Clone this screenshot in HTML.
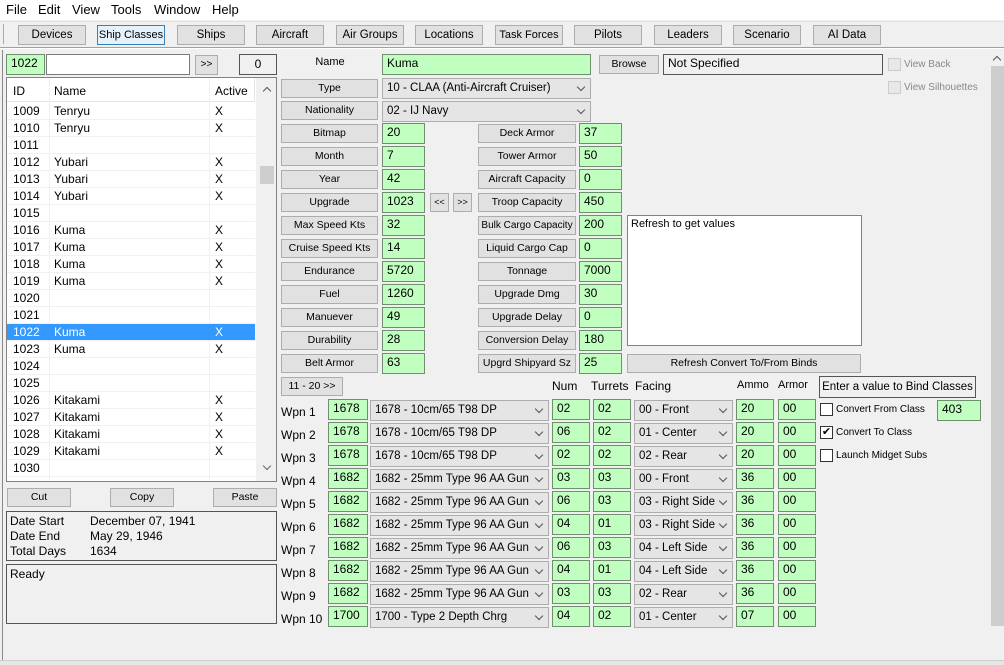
<!DOCTYPE html>
<html><head><meta charset="utf-8"><style>
*{box-sizing:border-box}
body{margin:0;width:1004px;height:665px;background:#f0f0f0;font-family:"Liberation Sans",sans-serif;font-size:12px;color:#000;position:relative;overflow:hidden}
.a{position:absolute;white-space:nowrap}
.b{position:absolute;background:#e1e1e1;border:1px solid #adadad;text-align:center;font-size:10.5px;line-height:17px;height:19px;white-space:nowrap;overflow:hidden}
.tb{position:absolute;top:25px;height:20px;width:68px;background:#e1e1e1;border:1px solid #adadad;text-align:center;font-size:11.5px;line-height:18px;white-space:nowrap;overflow:hidden}
.g{position:absolute;background:#c0ffc0;border:1px solid #6f8f6f;height:21px;padding:1px 0 0 4px;font-size:12px;line-height:15px}
.s{position:absolute;background:#e5e5e5;border:1px solid #adadad;height:21px;padding:0 0 0 4px;font-size:11.5px;line-height:19px;white-space:nowrap;overflow:hidden}
.s i{position:absolute;right:6px;top:5px;width:6px;height:6px;border-right:1.5px solid #555;border-bottom:1.5px solid #555;transform:rotate(45deg)}
.row{position:absolute;left:7px;width:248px;height:17px;line-height:17px;border-bottom:1px solid #f0f0f0}
.row span{position:absolute}
.cb{position:absolute;width:13px;height:13px;border:1px solid #333;background:#fff}
</style></head><body>
<div class="a" style="left:0;top:0;width:1004px;height:20px;background:#fff"></div>
<div class="a" style="left:6px;top:2px;font-size:13px">File</div>
<div class="a" style="left:38px;top:2px;font-size:13px">Edit</div>
<div class="a" style="left:72px;top:2px;font-size:13px">View</div>
<div class="a" style="left:111px;top:2px;font-size:13px">Tools</div>
<div class="a" style="left:154px;top:2px;font-size:13px">Window</div>
<div class="a" style="left:212px;top:2px;font-size:13px">Help</div>
<div class="a" style="left:0;top:21px;width:1004px;height:1px;background:#e3e3e3"></div>
<div class="a" style="left:3px;top:24px;width:1px;height:20px;background:#aaa"></div>
<div class="tb" style="left:18px">Devices</div>
<div class="tb" style="left:97px;border-color:#3c7fb1;background:#e5f1fb;font-size:11px">Ship Classes</div>
<div class="tb" style="left:177px">Ships</div>
<div class="tb" style="left:256px">Aircraft</div>
<div class="tb" style="left:336px">Air Groups</div>
<div class="tb" style="left:415px">Locations</div>
<div class="tb" style="left:495px;font-size:11px">Task Forces</div>
<div class="tb" style="left:574px">Pilots</div>
<div class="tb" style="left:654px">Leaders</div>
<div class="tb" style="left:733px">Scenario</div>
<div class="tb" style="left:813px">AI Data</div>
<div class="a" style="left:0;top:47px;width:1004px;height:2px;border-top:1px solid #a0a0a0;border-bottom:1px solid #fff"></div>
<div class="a" style="left:2px;top:50px;width:1px;height:612px;background:#888"></div>
<div class="a" style="left:991px;top:66px;width:13px;height:560px;background:#cdcdcd"></div>
<div class="a" style="left:994px;top:57px;width:6px;height:6px;border-left:1.5px solid #555;border-top:1.5px solid #555;transform:rotate(45deg)"></div>
<div class="a" style="left:0;top:660px;width:1004px;height:5px;background:#e6e6e6;border-top:1px solid #ccc"></div>

<div class="g" style="left:6px;top:54px;width:39px;height:21px">1022</div>
<div class="a" style="left:46px;top:54px;width:144px;height:21px;background:#fff;border:1px solid #7a7a7a"></div>
<div class="b" style="left:195px;top:55px;width:23px;height:20px;font-size:10px">&gt;&gt;</div>
<div class="a" style="left:239px;top:54px;width:38px;height:21px;border:1px solid #555;text-align:center;line-height:19px">0</div>
<div class="a" style="left:6px;top:77px;width:271px;height:405px;background:#fff;border:1px solid #828282"></div>
<div class="a" style="left:7px;top:78px;width:248px;height:24px;border-bottom:1px solid #e5e5e5"></div>
<div class="a" style="left:49px;top:78px;width:1px;height:402px;background:#f0f0f0"></div>
<div class="a" style="left:209px;top:78px;width:1px;height:402px;background:#f0f0f0"></div>
<div class="a" style="left:254px;top:78px;width:1px;height:24px;background:#e5e5e5"></div>
<div class="a" style="left:13px;top:84px">ID</div>
<div class="a" style="left:54px;top:84px">Name</div>
<div class="a" style="left:215px;top:84px">Active</div>
<div class="a" style="left:256px;top:78px;width:20px;height:403px;background:#f0f0f0"></div>
<div class="a" style="left:260px;top:166px;width:14px;height:18px;background:#cdcdcd"></div>
<div class="a" style="left:264px;top:88px;width:6px;height:6px;border-left:1.5px solid #555;border-top:1.5px solid #555;transform:rotate(45deg)"></div>
<div class="a" style="left:264px;top:463px;width:6px;height:6px;border-right:1.5px solid #666;border-bottom:1.5px solid #666;transform:rotate(45deg)"></div>
<div class="row" style="top:103px"><span style="left:6px">1009</span><span style="left:47px">Tenryu</span><span style="left:208px">X</span></div>
<div class="row" style="top:120px"><span style="left:6px">1010</span><span style="left:47px">Tenryu</span><span style="left:208px">X</span></div>
<div class="row" style="top:137px"><span style="left:6px">1011</span></div>
<div class="row" style="top:154px"><span style="left:6px">1012</span><span style="left:47px">Yubari</span><span style="left:208px">X</span></div>
<div class="row" style="top:171px"><span style="left:6px">1013</span><span style="left:47px">Yubari</span><span style="left:208px">X</span></div>
<div class="row" style="top:188px"><span style="left:6px">1014</span><span style="left:47px">Yubari</span><span style="left:208px">X</span></div>
<div class="row" style="top:205px"><span style="left:6px">1015</span></div>
<div class="row" style="top:222px"><span style="left:6px">1016</span><span style="left:47px">Kuma</span><span style="left:208px">X</span></div>
<div class="row" style="top:239px"><span style="left:6px">1017</span><span style="left:47px">Kuma</span><span style="left:208px">X</span></div>
<div class="row" style="top:256px"><span style="left:6px">1018</span><span style="left:47px">Kuma</span><span style="left:208px">X</span></div>
<div class="row" style="top:273px"><span style="left:6px">1019</span><span style="left:47px">Kuma</span><span style="left:208px">X</span></div>
<div class="row" style="top:290px"><span style="left:6px">1020</span></div>
<div class="row" style="top:307px"><span style="left:6px">1021</span></div>
<div class="row" style="top:324px;background:#3399ff;color:#fff"><span style="left:6px">1022</span><span style="left:47px">Kuma</span><span style="left:208px">X</span></div>
<div class="row" style="top:341px"><span style="left:6px">1023</span><span style="left:47px">Kuma</span><span style="left:208px">X</span></div>
<div class="row" style="top:358px"><span style="left:6px">1024</span></div>
<div class="row" style="top:375px"><span style="left:6px">1025</span></div>
<div class="row" style="top:392px"><span style="left:6px">1026</span><span style="left:47px">Kitakami</span><span style="left:208px">X</span></div>
<div class="row" style="top:409px"><span style="left:6px">1027</span><span style="left:47px">Kitakami</span><span style="left:208px">X</span></div>
<div class="row" style="top:426px"><span style="left:6px">1028</span><span style="left:47px">Kitakami</span><span style="left:208px">X</span></div>
<div class="row" style="top:443px"><span style="left:6px">1029</span><span style="left:47px">Kitakami</span><span style="left:208px">X</span></div>
<div class="row" style="top:460px"><span style="left:6px">1030</span></div>
<div class="b" style="left:7px;top:488px;width:64px">Cut</div>
<div class="b" style="left:110px;top:488px;width:64px">Copy</div>
<div class="b" style="left:213px;top:488px;width:64px">Paste</div>
<div class="a" style="left:6px;top:511px;width:271px;height:50px;border:1px solid #555"></div>
<div class="a" style="left:10px;top:514px;line-height:15px">Date Start<br>Date End<br>Total Days</div>
<div class="a" style="left:90px;top:514px;line-height:15px">December 07, 1941<br>May 29, 1946<br>1634</div>
<div class="a" style="left:6px;top:564px;width:271px;height:60px;border:1px solid #555"></div>
<div class="a" style="left:10px;top:567px">Ready</div>

<div class="a" style="left:315px;top:56px;width:30px;text-align:center;font-size:11px">Name</div>
<div class="g" style="left:382px;top:54px;width:209px">Kuma</div>
<div class="b" style="left:599px;top:55px;width:60px">Browse</div>
<div class="a" style="left:663px;top:54px;width:220px;height:21px;border:1px solid #555;padding:1px 4px">Not Specified</div>
<div class="cb" style="left:888px;top:58px;border-color:#ccc;background:#e8e8e8"></div>
<div class="a" style="left:904px;top:59px;font-size:10px;color:#888">View Back</div>
<div class="cb" style="left:888px;top:81px;border-color:#ccc;background:#e8e8e8"></div>
<div class="a" style="left:904px;top:82px;font-size:10px;color:#888">View Silhouettes</div>
<div class="b" style="left:281px;top:79px;width:97px">Type</div>
<div class="s" style="left:382px;top:78px;width:209px">10 - CLAA (Anti-Aircraft Cruiser)<i></i></div>
<div class="b" style="left:281px;top:101px;width:97px">Nationality</div>
<div class="s" style="left:382px;top:101px;width:209px">02 - IJ Navy<i></i></div>

<div class="b" style="left:281px;top:124px;width:97px">Bitmap</div><div class="g" style="left:382px;top:123px;width:43px">20</div>
<div class="b" style="left:281px;top:147px;width:97px">Month</div><div class="g" style="left:382px;top:146px;width:43px">7</div>
<div class="b" style="left:281px;top:170px;width:97px">Year</div><div class="g" style="left:382px;top:169px;width:43px">42</div>
<div class="b" style="left:281px;top:193px;width:97px">Upgrade</div><div class="g" style="left:382px;top:192px;width:43px">1023</div>
<div class="b" style="left:430px;top:193px;width:19px;font-size:9px">&lt;&lt;</div>
<div class="b" style="left:453px;top:193px;width:19px;font-size:9px">&gt;&gt;</div>
<div class="b" style="left:281px;top:216px;width:97px">Max Speed Kts</div><div class="g" style="left:382px;top:215px;width:43px">32</div>
<div class="b" style="left:281px;top:239px;width:97px">Cruise Speed Kts</div><div class="g" style="left:382px;top:238px;width:43px">14</div>
<div class="b" style="left:281px;top:262px;width:97px">Endurance</div><div class="g" style="left:382px;top:261px;width:43px">5720</div>
<div class="b" style="left:281px;top:285px;width:97px">Fuel</div><div class="g" style="left:382px;top:284px;width:43px">1260</div>
<div class="b" style="left:281px;top:308px;width:97px">Manuever</div><div class="g" style="left:382px;top:307px;width:43px">49</div>
<div class="b" style="left:281px;top:331px;width:97px">Durability</div><div class="g" style="left:382px;top:330px;width:43px">28</div>
<div class="b" style="left:281px;top:354px;width:97px">Belt Armor</div><div class="g" style="left:382px;top:353px;width:43px">63</div>

<div class="b" style="left:478px;top:124px;width:98px">Deck Armor</div><div class="g" style="left:579px;top:123px;width:43px">37</div>
<div class="b" style="left:478px;top:147px;width:98px">Tower Armor</div><div class="g" style="left:579px;top:146px;width:43px">50</div>
<div class="b" style="left:478px;top:170px;width:98px">Aircraft Capacity</div><div class="g" style="left:579px;top:169px;width:43px">0</div>
<div class="b" style="left:478px;top:193px;width:98px">Troop Capacity</div><div class="g" style="left:579px;top:192px;width:43px">450</div>
<div class="b" style="left:478px;top:216px;width:98px;font-size:10px">Bulk Cargo Capacity</div><div class="g" style="left:579px;top:215px;width:43px">200</div>
<div class="b" style="left:478px;top:239px;width:98px">Liquid Cargo Cap</div><div class="g" style="left:579px;top:238px;width:43px">0</div>
<div class="b" style="left:478px;top:262px;width:98px">Tonnage</div><div class="g" style="left:579px;top:261px;width:43px">7000</div>
<div class="b" style="left:478px;top:285px;width:98px">Upgrade Dmg</div><div class="g" style="left:579px;top:284px;width:43px">30</div>
<div class="b" style="left:478px;top:308px;width:98px">Upgrade Delay</div><div class="g" style="left:579px;top:307px;width:43px">0</div>
<div class="b" style="left:478px;top:331px;width:98px">Conversion Delay</div><div class="g" style="left:579px;top:330px;width:43px">180</div>
<div class="b" style="left:478px;top:354px;width:98px">Upgrd Shipyard Sz</div><div class="g" style="left:579px;top:353px;width:43px">25</div>

<div class="a" style="left:627px;top:215px;width:235px;height:131px;background:#fff;border:1px solid #828282;padding:2px 3px;font-size:11px">Refresh to get values</div>
<div class="b" style="left:627px;top:354px;width:234px">Refresh Convert To/From Binds</div>

<div class="b" style="left:281px;top:377px;width:62px">11 - 20 &gt;&gt;</div>
<div class="a" style="left:552px;top:379px">Num</div>
<div class="a" style="left:591px;top:379px">Turrets</div>
<div class="a" style="left:635px;top:379px">Facing</div>
<div class="a" style="left:737px;top:379px;font-size:11px">Ammo</div>
<div class="a" style="left:778px;top:379px;font-size:11px">Armor</div>
<div class="a" style="left:819px;top:376px;width:157px;height:22px;border:1px solid #555;text-align:center;line-height:20px;font-size:11.5px">Enter a value to Bind Classes</div>
<div class="cb" style="left:820px;top:403px"></div><div class="a" style="left:836px;top:404px;font-size:10px">Convert From Class</div>
<div class="g" style="left:937px;top:400px;width:44px">403</div>
<div class="cb" style="left:820px;top:426px;font-size:11px;line-height:11px;text-align:center">&#10004;</div><div class="a" style="left:836px;top:427px;font-size:10px">Convert To Class</div>
<div class="cb" style="left:820px;top:449px"></div><div class="a" style="left:836px;top:450px;font-size:10px">Launch Midget Subs</div>

<div class="a" style="left:281px;top:405px">Wpn 1</div><div class="g" style="left:328px;top:399px;width:40px">1678</div><div class="s" style="left:370px;top:400px;width:179px">1678 - 10cm/65 T98 DP<i></i></div><div class="g" style="left:552px;top:399px;width:38px">02</div><div class="g" style="left:593px;top:399px;width:38px">02</div><div class="s" style="left:634px;top:400px;width:99px">00 - Front<i></i></div><div class="g" style="left:736px;top:399px;width:38px">20</div><div class="g" style="left:778px;top:399px;width:38px">00</div>
<div class="a" style="left:281px;top:428px">Wpn 2</div><div class="g" style="left:328px;top:422px;width:40px">1678</div><div class="s" style="left:370px;top:423px;width:179px">1678 - 10cm/65 T98 DP<i></i></div><div class="g" style="left:552px;top:422px;width:38px">06</div><div class="g" style="left:593px;top:422px;width:38px">02</div><div class="s" style="left:634px;top:423px;width:99px">01 - Center<i></i></div><div class="g" style="left:736px;top:422px;width:38px">20</div><div class="g" style="left:778px;top:422px;width:38px">00</div>
<div class="a" style="left:281px;top:451px">Wpn 3</div><div class="g" style="left:328px;top:445px;width:40px">1678</div><div class="s" style="left:370px;top:446px;width:179px">1678 - 10cm/65 T98 DP<i></i></div><div class="g" style="left:552px;top:445px;width:38px">02</div><div class="g" style="left:593px;top:445px;width:38px">02</div><div class="s" style="left:634px;top:446px;width:99px">02 - Rear<i></i></div><div class="g" style="left:736px;top:445px;width:38px">20</div><div class="g" style="left:778px;top:445px;width:38px">00</div>
<div class="a" style="left:281px;top:474px">Wpn 4</div><div class="g" style="left:328px;top:468px;width:40px">1682</div><div class="s" style="left:370px;top:469px;width:179px">1682 - 25mm Type 96 AA Gun<i></i></div><div class="g" style="left:552px;top:468px;width:38px">03</div><div class="g" style="left:593px;top:468px;width:38px">03</div><div class="s" style="left:634px;top:469px;width:99px">00 - Front<i></i></div><div class="g" style="left:736px;top:468px;width:38px">36</div><div class="g" style="left:778px;top:468px;width:38px">00</div>
<div class="a" style="left:281px;top:497px">Wpn 5</div><div class="g" style="left:328px;top:491px;width:40px">1682</div><div class="s" style="left:370px;top:492px;width:179px">1682 - 25mm Type 96 AA Gun<i></i></div><div class="g" style="left:552px;top:491px;width:38px">06</div><div class="g" style="left:593px;top:491px;width:38px">03</div><div class="s" style="left:634px;top:492px;width:99px">03 - Right Side<i></i></div><div class="g" style="left:736px;top:491px;width:38px">36</div><div class="g" style="left:778px;top:491px;width:38px">00</div>
<div class="a" style="left:281px;top:520px">Wpn 6</div><div class="g" style="left:328px;top:514px;width:40px">1682</div><div class="s" style="left:370px;top:515px;width:179px">1682 - 25mm Type 96 AA Gun<i></i></div><div class="g" style="left:552px;top:514px;width:38px">04</div><div class="g" style="left:593px;top:514px;width:38px">01</div><div class="s" style="left:634px;top:515px;width:99px">03 - Right Side<i></i></div><div class="g" style="left:736px;top:514px;width:38px">36</div><div class="g" style="left:778px;top:514px;width:38px">00</div>
<div class="a" style="left:281px;top:543px">Wpn 7</div><div class="g" style="left:328px;top:537px;width:40px">1682</div><div class="s" style="left:370px;top:538px;width:179px">1682 - 25mm Type 96 AA Gun<i></i></div><div class="g" style="left:552px;top:537px;width:38px">06</div><div class="g" style="left:593px;top:537px;width:38px">03</div><div class="s" style="left:634px;top:538px;width:99px">04 - Left Side<i></i></div><div class="g" style="left:736px;top:537px;width:38px">36</div><div class="g" style="left:778px;top:537px;width:38px">00</div>
<div class="a" style="left:281px;top:566px">Wpn 8</div><div class="g" style="left:328px;top:560px;width:40px">1682</div><div class="s" style="left:370px;top:561px;width:179px">1682 - 25mm Type 96 AA Gun<i></i></div><div class="g" style="left:552px;top:560px;width:38px">04</div><div class="g" style="left:593px;top:560px;width:38px">01</div><div class="s" style="left:634px;top:561px;width:99px">04 - Left Side<i></i></div><div class="g" style="left:736px;top:560px;width:38px">36</div><div class="g" style="left:778px;top:560px;width:38px">00</div>
<div class="a" style="left:281px;top:589px">Wpn 9</div><div class="g" style="left:328px;top:583px;width:40px">1682</div><div class="s" style="left:370px;top:584px;width:179px">1682 - 25mm Type 96 AA Gun<i></i></div><div class="g" style="left:552px;top:583px;width:38px">03</div><div class="g" style="left:593px;top:583px;width:38px">03</div><div class="s" style="left:634px;top:584px;width:99px">02 - Rear<i></i></div><div class="g" style="left:736px;top:583px;width:38px">36</div><div class="g" style="left:778px;top:583px;width:38px">00</div>
<div class="a" style="left:281px;top:612px">Wpn 10</div><div class="g" style="left:328px;top:606px;width:40px">1700</div><div class="s" style="left:370px;top:607px;width:179px">1700 - Type 2 Depth Chrg<i></i></div><div class="g" style="left:552px;top:606px;width:38px">04</div><div class="g" style="left:593px;top:606px;width:38px">02</div><div class="s" style="left:634px;top:607px;width:99px">01 - Center<i></i></div><div class="g" style="left:736px;top:606px;width:38px">07</div><div class="g" style="left:778px;top:606px;width:38px">00</div>
</body></html>
